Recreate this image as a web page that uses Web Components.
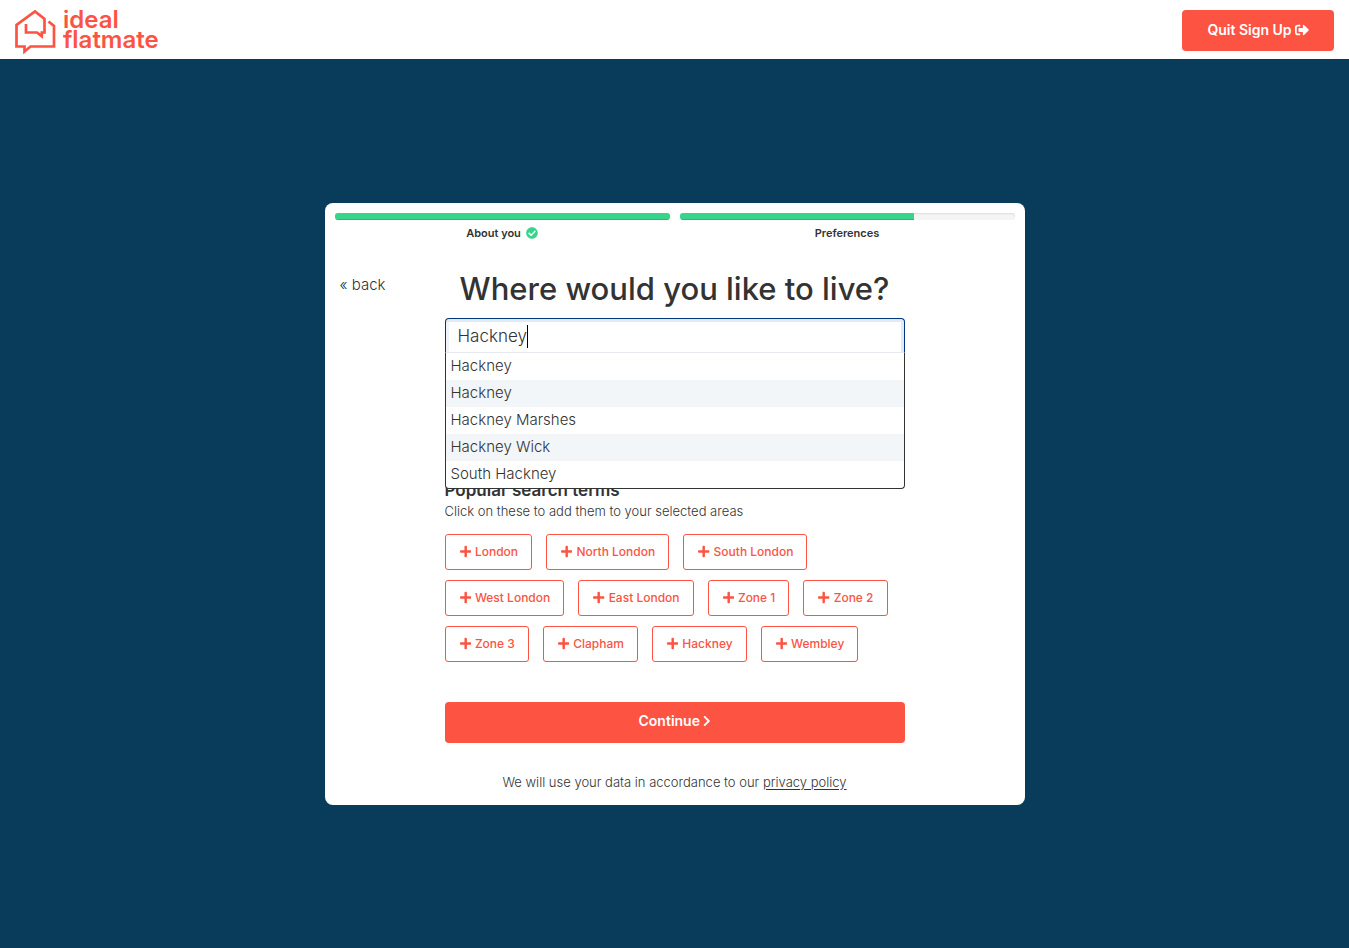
<!DOCTYPE html>
<html lang="en">
<head>
<meta charset="utf-8">
<meta name="viewport" content="width=device-width, initial-scale=1">
<title>Ideal Flatmate – Sign up</title>
<style>
  html, body { margin: 0; min-height: 100%; }
  body {
    --brand: #fc5343;
    --ink: #333;
    --green: #37d58b;
    background: #093c5a;
    color: var(--ink);
    font-family: Inter, "Open Sans", sans-serif;
    font-size: 14px;
  }
</style>
</head>
<body>
<signup-page></signup-page>

<script>
const icons = {
  plus: ['0 0 448 512', 'M416 208H272V64c0-17.700-14.300-32-32-32h-32c-17.700 0-32 14.300-32 32v144H32c-17.700 0-32 14.300-32 32v32c0 17.700 14.300 32 32 32h144v144c0 17.700 14.300 32 32 32h32c17.700 0 32-14.300 32-32V304h144c17.700 0 32-14.300 32-32v-32c0-17.700-14.300-32-32-32z'],
  exit: ['0 0 512 512', 'M497 273L329 441c-15 15-41 4.500-41-17v-96H152c-13.300 0-24-10.700-24-24v-96c0-13.300 10.700-24 24-24h136V88c0-21.400 25.900-32 41-17l168 168c9.300 9.400 9.300 24.600 0 34zM192 436v-40c0-6.600-5.400-12-12-12H96c-17.700 0-32-14.300-32-32V160c0-17.700 14.300-32 32-32h84c6.600 0 12-5.400 12-12V76c0-6.600-5.400-12-12-12H96c-53 0-96 43-96 96v192c0 53 43 96 96 96h84c6.600 0 12-5.400 12-12z'],
  chevron: ['0 0 320 512', 'M285 273L91 467c-9 9-25 9-34 0l-22-22c-9-9-9-24 0-34l153-155L35 101c-9-10-9-25 0-34l22-22c9-9 25-9 34 0l194 194c9 10 9 25 0 34z'],
  check: ['0 0 512 512', 'M504 256c0 136.967-111.033 248-248 248S8 392.967 8 256 119.033 8 256 8s248 111.033 248 248zM227.314 387.314l184-184c6.248-6.248 6.248-16.379 0-22.627l-22.627-22.627c-6.248-6.248-16.379-6.249-22.628 0L216 308.118l-70.059-70.059c-6.248-6.248-16.379-6.248-22.628 0l-22.627 22.627c-6.248 6.248-6.248 16.379 0 22.627l104 104c6.249 6.249 16.379 6.249 22.628.001z']
};

function define(name, render, ready) {
  customElements.define(name, class extends HTMLElement {
    constructor() {
      super();
      this.attachShadow({ mode: 'open' });
    }
    connectedCallback() {
      this.shadowRoot.innerHTML = render(this);
      if (ready) ready(this.shadowRoot, this);
    }
  });
}

define('ui-icon', el => {
  const [box, path] = icons[el.getAttribute('name')];
  return `
  <style>
    :host { display: inline-flex; flex: none; }
    svg { height: var(--icon-size, 12px); width: auto; fill: currentColor; }
  </style>
  <svg viewBox="${box}" aria-hidden="true"><path d="${path}"/></svg>`;
});

define('brand-logo', () => `
  <style>
    :host { display: block; }
    a { display: flex; gap: 7px; color: var(--brand); text-decoration: none; }
    svg { width: 41px; height: 45px; fill: none; stroke: currentColor; stroke-width: 2.700; }
    span { padding-top: 1px; font-size: 24px; line-height: 20px; font-weight: 600; }
  </style>
  <a href="#" aria-label="ideal flatmate">
    <svg viewBox="15 9 41 45" aria-hidden="true">
      <path d="M48.500 21.500L54 26V46.500H30.500L24.500 51.500V46.500H16.500V25L35 11.500L44.500 19V32.500H41.800V36.300L37 32.500H26V24"/>
    </svg>
    <span>ideal<br>flatmate</span>
  </a>`);

define('action-button', () => `
  <style>
    :host { display: block; }
    button {
      display: flex; align-items: center; justify-content: center; gap: 3px;
      width: 100%; height: 41px; padding: 0 24px 2px;
      border: 0; border-radius: 4px; background: var(--brand); color: #fff;
      font: 600 14px/20px Inter, sans-serif; cursor: pointer;
    }
  </style>
  <button type="button"><slot></slot></button>`);

define('site-header', () => `
  <style>
    :host {
      display: flex; justify-content: space-between; align-items: center;
      height: 59px; padding: 0 15px; background: #fff;
    }
    brand-logo { margin-top: 4px; }
    action-button { --icon-size: 14px; margin-top: 2px; width: 152px; }
  </style>
  <brand-logo></brand-logo>
  <action-button>Quit Sign Up <ui-icon name="exit"></ui-icon></action-button>`);

define('step-progress', el => `
  <style>
    :host { display: block; flex: 1; text-align: center; }
    .track {
      height: 7px; border-radius: 3px; overflow: hidden; background: #f5f5f5;
      box-shadow: inset 0 1px 2px rgba(0, 0, 0, .1);
    }
    .fill {
      width: ${el.getAttribute('value')}%; height: 100%; background: var(--green);
      box-shadow: inset 0 -1px 0 rgba(0, 0, 0, .15);
    }
    .label {
      display: flex; justify-content: center; align-items: center; gap: 5px;
      margin-top: 4px; font-size: 11px; line-height: 18px; font-weight: 600;
    }
    ui-icon { color: var(--green); --icon-size: 12px; }
  </style>
  <div class="track" role="progressbar" aria-label="${el.textContent}" aria-valuenow="${el.getAttribute('value')}" aria-valuemin="0" aria-valuemax="100"><div class="fill"></div></div>
  <div class="label"><slot></slot>${el.hasAttribute('done') ? '<ui-icon name="check"></ui-icon>' : ''}</div>`);

define('area-search', () => `
  <style>
    :host { display: block; }
    h1 {
      margin: 0 0 9px; font-size: 31px; line-height: 40px; font-weight: 500;
      text-align: center;
    }
    .box { position: relative; }
    input {
      display: block; box-sizing: border-box; width: 100%; height: 35px; padding: 3px 12px 1px;
      border: 1px solid #003580; border-bottom-color: #e6e9f0; border-radius: 4px 4px 0 0;
      box-shadow: inset 0 3px 0 #e4eaf2, inset 3px 0 0 #f0f3f8, inset -3px 0 0 #e4eaf2;
      outline: 0; color: var(--ink); caret-color: transparent;
      font: 300 17px/24px Inter, sans-serif;
    }
    .caret { position: absolute; top: 7px; width: 1px; height: 23px; background: #000; }
    ul {
      position: absolute; top: 35px; left: 0; right: 0; z-index: 1;
      margin: 0; padding: 0; list-style: none; background: #fff;
      border: 1px solid var(--ink); border-top: 0; border-radius: 0 0 4px 4px;
    }
    li:nth-child(even) { background: #f2f6f9; }
    li button {
      display: block; width: 100%; height: 27px; padding: 0 5px 1px; border: 0;
      background: none; color: var(--ink); text-align: left;
      font: 300 15px/26px Inter, sans-serif;
    }
  </style>
  <h1><label for="area">Where would you like to live?</label></h1>
  <div class="box">
    <input id="area" type="text" value="Hackney" autocomplete="off">
    <span class="caret"></span>
    <ul>
      <li><button type="button">Hackney</button></li>
      <li><button type="button">Hackney</button></li>
      <li><button type="button">Hackney Marshes</button></li>
      <li><button type="button">Hackney Wick</button></li>
      <li><button type="button">South Hackney</button></li>
    </ul>
  </div>`,
  root => {
    const input = root.querySelector('input');
    const caret = root.querySelector('.caret');
    const pen = document.createElement('canvas').getContext('2d');
    const place = () => {
      pen.font = getComputedStyle(input).font;
      caret.style.left = Math.floor(13 + pen.measureText(input.value).width) + 'px';
    };
    input.addEventListener('input', place);
    place();
  });

define('area-chip', () => `
  <style>
    :host { display: block; }
    button {
      display: flex; align-items: center; gap: 4px; height: 36px; padding: 0 13px 0 14px;
      border: 1px solid var(--brand); border-radius: 3px; background: #fff; color: var(--brand);
      font: 500 12px/18px Inter, sans-serif; white-space: nowrap; cursor: pointer;
    }
    ui-icon { --icon-size: 13px; }
  </style>
  <button type="button"><ui-icon name="plus"></ui-icon><slot></slot></button>`);

define('popular-terms', () => `
  <style>
    :host { display: block; }
    h2 { margin: 0; font-size: 17px; line-height: 22px; font-weight: 600; }
    p { margin: 0 0 13px; font-size: 13px; line-height: 20px; font-weight: 300; }
    .chips { display: flex; flex-wrap: wrap; gap: 10px 14px; }
  </style>
  <h2>Popular search terms</h2>
  <p>Click on these to add them to your selected areas</p>
  <div class="chips">
    ${['London', 'North London', 'South London', 'West London', 'East London', 'Zone 1', 'Zone 2', 'Zone 3', 'Clapham', 'Hackney', 'Wembley']
      .map(name => `<area-chip>${name}</area-chip>`).join('')}
  </div>`);

define('signup-card', () => `
  <style>
    :host {
      display: block; box-sizing: border-box; width: 100%; max-width: 700px;
      padding: 10px; border-radius: 8px; background: #fff;
    }
    .steps { display: flex; gap: 10px; }
    .body {
      display: grid; grid-template-columns: 1fr minmax(0, 460px) 1fr;
      margin-top: 27px;
    }
    .back {
      justify-self: start; align-self: start; margin: 6px 0 0 5px;
      color: var(--ink); font-size: 15px; line-height: 20px; font-weight: 300; text-decoration: none;
    }
    .selected { height: 126px; }
    .continue { --icon-size: 12px; margin-top: 40px; }
    footer {
      margin: 30px 0 4px; font-size: 13px; line-height: 18px; font-weight: 300; text-align: center;
    }
    footer a { color: inherit; text-underline-offset: 2px; }
  </style>
  <div class="steps">
    <step-progress value="100" done>About you</step-progress>
    <step-progress value="70">Preferences</step-progress>
  </div>
  <div class="body">
    <a class="back" href="#">« back</a>
    <div>
      <area-search></area-search>
      <div class="selected"></div>
      <popular-terms></popular-terms>
      <action-button class="continue">Continue <ui-icon name="chevron"></ui-icon></action-button>
      <footer>We will use your data in accordance to our <a href="#">privacy policy</a></footer>
    </div>
  </div>`);

define('signup-page', () => `
  <style>
    :host { display: flex; flex-direction: column; min-height: 100vh; }
    main { flex: 1; display: flex; align-items: center; justify-content: center; }
  </style>
  <site-header></site-header>
  <main><signup-card></signup-card></main>`);
</script>
</body>
</html>
